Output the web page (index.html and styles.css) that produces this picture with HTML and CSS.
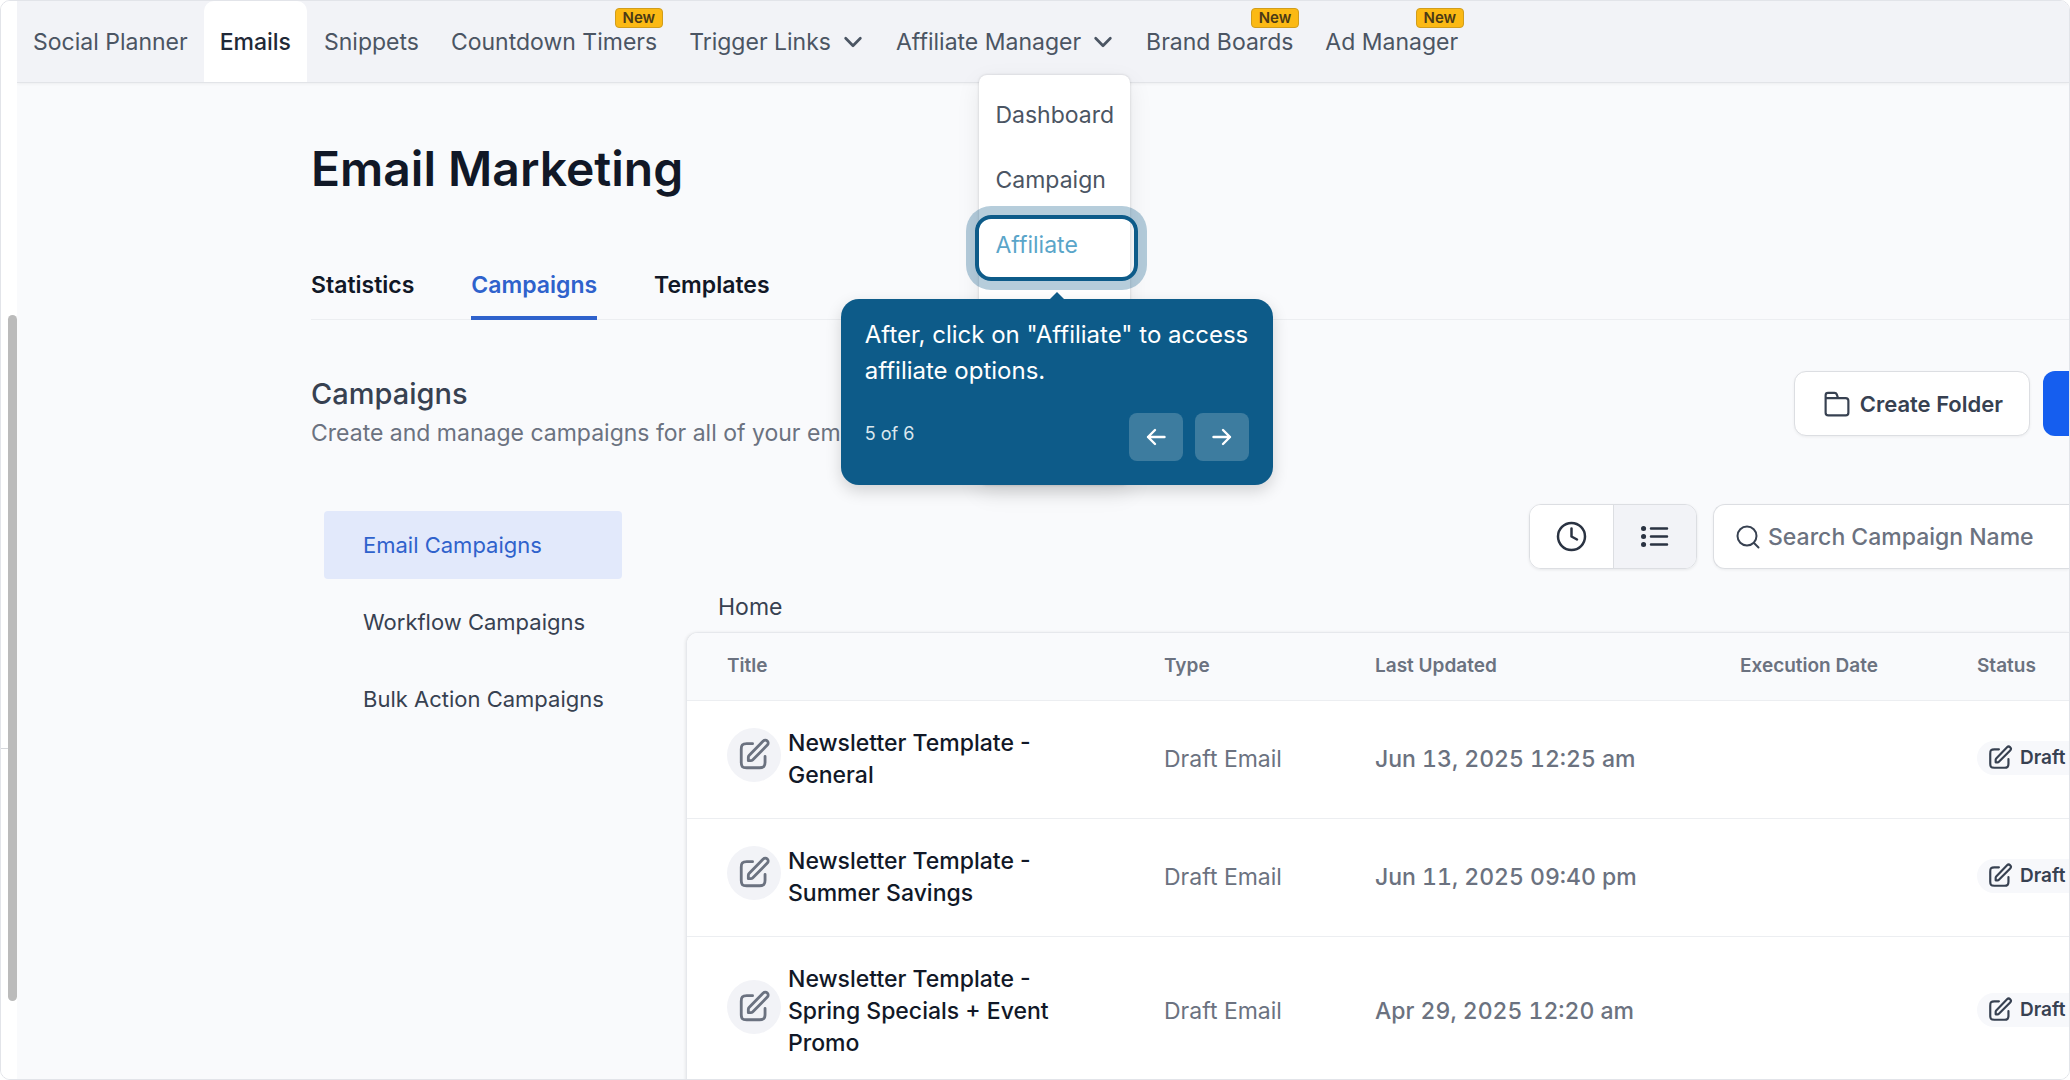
FILE: index.html
```html
<!DOCTYPE html>
<html lang="en">
<head>
  <meta charset="UTF-8" />
  <title>Email Marketing - Campaigns</title>
  <link rel="stylesheet" href="styles.css">
</head>
<body>
  <svg class="sprite" aria-hidden="true">
    <symbol id="chevron" viewBox="0 0 24 24"><path d="m4 8 8 8 8-8" /></symbol>
    <symbol id="edit" viewBox="0 0 24 24"><path d="M11 4H6.800c-1.700 0-2.500.3-3.100.9S3 6.500 3 8v9.200c0 1.700.2 2.400.7 3s1.400.8 3.100.8H16c1.700 0 2.400-.2 3-.8s.8-1.300.8-3V13M8 16h1.700c.5 0 .9-.1 1.300-.5L21.400 5a2 2 0 0 0-2.900-2.900L8.500 12.400c-.4.4-.5.800-.5 1.300V16Z" /></symbol>
  </svg>

  <div class="app">
    <div class="rail">
      <div class="rail-line"></div>
      <div class="scroll-thumb"></div>
    </div>

    <div class="page">
      <nav class="topnav">
        <a href="#" class="nav-item">Social Planner</a>
        <a href="#" class="nav-item active">Emails</a>
        <a href="#" class="nav-item">Snippets</a>
        <a href="#" class="nav-item">Countdown Timers<span class="badge">New</span></a>
        <a href="#" class="nav-item">Trigger Links <svg class="chevron"><use href="#chevron" /></svg></a>
        <div class="nav-group">
          <a href="#" class="nav-item">Affiliate Manager <svg class="chevron"><use href="#chevron" /></svg></a>
          <div class="dropdown">
            <a href="#">Dashboard</a>
            <a href="#">Campaign</a>
            <div class="highlight-wrap">
              <a href="#" class="current">Affiliate</a>
              <div class="highlight">
                <!-- Guide step -->
                <div class="guide">
                  <p>After, click on "Affiliate" to access affiliate options.</p>
                  <div class="guide-footer">
                    <span class="step">5 of 6</span>
                    <button type="button" aria-label="Previous"><svg viewBox="0 0 24 24"><path d="M20.500 12H4m7-7-7 7 7 7" /></svg></button>
                    <button type="button" aria-label="Next"><svg viewBox="0 0 24 24"><path d="M3.500 12H20m-7-7 7 7-7 7" /></svg></button>
                  </div>
                </div>
              </div>
            </div>
          </div>
        </div>
        <a href="#" class="nav-item">Brand Boards<span class="badge">New</span></a>
        <a href="#" class="nav-item">Ad Manager<span class="badge">New</span></a>
      </nav>

      <main>
        <h1>Email Marketing</h1>
        <div class="tabs">
          <a href="#">Statistics</a>
          <a href="#" class="active">Campaigns</a>
          <a href="#">Templates</a>
        </div>

        <div class="section-head">
          <div class="section-text">
            <h2>Campaigns</h2>
            <p>Create and manage campaigns for all of your ema</p>
          </div>
          <button type="button" class="btn">
            <svg viewBox="0 0 24 24"><path d="M1.500 7V4c0-1.400.8-2.200 2.200-2.200h6c1 0 1.700.4 2 1.200L13 6.500M1.500 6.500H20c1.600 0 2.500.9 2.500 2.500v11c0 1.600-.9 2.500-2.500 2.500H4c-1.600 0-2.500-.9-2.500-2.500Z" /></svg>
            Create Folder
          </button>
          <button type="button" class="btn-primary" aria-label="New campaign"></button>
        </div>

        <div class="columns">
          <div class="side">
            <a href="#" class="active">Email Campaigns</a>
            <a href="#">Workflow Campaigns</a>
            <a href="#">Bulk Action Campaigns</a>
          </div>

          <div class="list">
            <div class="toolbar">
              <div class="toggle">
                <button type="button" aria-label="Recent"><svg viewBox="0 0 32 32"><circle cx="15.500" cy="15.500" r="13.500" /><path d="M15.500 7.500v8l5.500 3" /></svg></button>
                <button type="button" class="on" aria-label="List"><svg viewBox="0 0 32 32"><path d="M12 7.500h16M12 15.500h16M12 23.500h16" /><path class="dots" d="M4.500 7.500h.1M4.500 15.500h.1M4.500 23.500h.1" /></svg></button>
              </div>
              <label class="search">
                <svg viewBox="0 0 24 24"><circle cx="11" cy="11" r="9.500" /><path d="m18 18 4.500 4.500" /></svg>
                <input type="text" placeholder="Search Campaign Name" aria-label="Search Campaign Name" />
              </label>
            </div>
            <a href="#" class="crumb">Home</a>

            <div class="table-box">
              <table>
                <thead>
                  <tr>
                    <th class="c-title">Title</th>
                    <th class="c-type">Type</th>
                    <th class="c-updated">Last Updated</th>
                    <th class="c-date">Execution Date</th>
                    <th>Status</th>
                  </tr>
                </thead>
                <tbody>
                  <tr>
                    <td><div class="title"><span class="circle"><svg><use href="#edit" /></svg></span><span class="name">Newsletter Template - General</span></div></td>
                    <td>Draft Email</td>
                    <td class="updated">Jun 13, 2025 12:25 am</td>
                    <td></td>
                    <td><span class="status"><svg><use href="#edit" /></svg>Draft</span></td>
                  </tr>
                  <tr>
                    <td><div class="title"><span class="circle"><svg><use href="#edit" /></svg></span><span class="name">Newsletter Template - Summer Savings</span></div></td>
                    <td>Draft Email</td>
                    <td class="updated">Jun 11, 2025 09:40 pm</td>
                    <td></td>
                    <td><span class="status"><svg><use href="#edit" /></svg>Draft</span></td>
                  </tr>
                  <tr>
                    <td><div class="title"><span class="circle"><svg><use href="#edit" /></svg></span><span class="name">Newsletter Template - Spring Specials + Event Promo</span></div></td>
                    <td>Draft Email</td>
                    <td class="updated">Apr 29, 2025 12:20 am</td>
                    <td></td>
                    <td><span class="status"><svg><use href="#edit" /></svg>Draft</span></td>
                  </tr>
                </tbody>
              </table>
            </div>
          </div>
        </div>
      </main>
    </div>
  </div>
</body>
</html>
```
FILE: styles.css
```css
* {
  box-sizing: border-box;
}
body {
  margin: 0;
  background: #fff;
  font-family: Inter, "Liberation Sans", sans-serif;
  font-size: 23px;
  line-height: 32px;
  color: #374151;
}
h1, h2, p {
  margin: 0;
}
a {
  color: inherit;
  text-decoration: none;
}
button {
  font: inherit;
  color: inherit;
  cursor: pointer;
}
svg {
  fill: none;
  stroke: currentColor;
  stroke-width: 2;
  stroke-linecap: round;
  stroke-linejoin: round;
  flex: none;
}
.sprite {
  display: none;
}
.app {
  display: flex;
  height: 100vh;
  overflow: hidden;
  border: 1px solid #e2e4e9;
  border-radius: 10px;
}

/* Left edge with the scrollbar */
.rail {
  position: relative;
  width: 16px;
  flex: none;
  background: #fff;
}
.rail-line {
  position: absolute;
  top: 747px;
  left: 0;
  width: 7px;
  height: 1px;
  background: #d5d7db;
}
.scroll-thumb {
  position: absolute;
  top: 314px;
  right: 0;
  width: 9px;
  height: 686px;
  border-radius: 5px;
  background: #bbb;
}
.page {
  flex: 1;
  min-width: 0;
  background: #f9fafc;
}

/* Top navigation */
.topnav {
  display: flex;
  height: 82px;
  background: #f2f3f7;
  border-bottom: 1px solid #e2e4e8;
  box-shadow: 0 1px 3px rgba(0, 0, 0, 0.05);
  color: #4b5563;
}
.nav-item {
  position: relative;
  display: flex;
  align-items: center;
  gap: 11px;
  height: 81px;
  padding: 0 16px;
  white-space: nowrap;
}
.nav-item.active {
  margin-right: 1px;
  background: #fff;
  border-radius: 10px 10px 0 0;
  font-weight: 500;
  color: #1f2937;
}
.chevron {
  width: 22px;
  height: 22px;
  stroke-width: 3;
}
.badge {
  position: absolute;
  top: 7px;
  right: 10px;
  padding: 0 7px;
  border: 1px solid #d19d1c;
  border-radius: 4px;
  background: #fbb914;
  font-size: 15px;
  font-weight: 600;
  line-height: 18px;
  color: #4b3a16;
}
.nav-group {
  position: relative;
}
.dropdown {
  position: absolute;
  z-index: 2;
  top: 74px;
  right: 0;
  min-height: 410px;
  padding: 8px 16px;
  background: #fff;
  border-radius: 8px;
  box-shadow: 0 0 3px rgba(0, 0, 0, 0.16), 0 8px 24px rgba(0, 0, 0, 0.08);
}
.dropdown a {
  display: block;
  line-height: 65px;
}
.dropdown .current {
  color: #5aa5c9;
}
.highlight-wrap {
  position: relative;
}
.highlight {
  position: absolute;
  top: 2px;
  bottom: -3px;
  left: -20px;
  right: -24px;
  border: 4px solid #0d5b89;
  border-radius: 16px;
  box-shadow: 0 0 0 9px rgba(13, 91, 137, 0.3);
}

/* Guide popup */
.guide {
  position: absolute;
  top: 80px;
  left: 50%;
  width: 432px;
  margin-left: -216px;
  padding: 18px 24px 24px;
  border-radius: 18px;
  background: #0d5b89;
  box-shadow: 0 6px 16px rgba(0, 0, 0, 0.16);
  color: #fff;
  font-size: 24px;
  line-height: 36px;
}
.guide::before {
  content: "";
  position: absolute;
  top: -7px;
  left: 50%;
  margin-left: -7px;
  border: 7px solid transparent;
  border-top: 0;
  border-bottom-color: #0d5b89;
}
.guide-footer {
  display: flex;
  align-items: center;
  gap: 12px;
  margin-top: 24px;
}
.step {
  flex: 1;
  padding-bottom: 6px;
  font-size: 18px;
  color: #dbe7ee;
}
.guide button {
  display: flex;
  align-items: center;
  justify-content: center;
  width: 54px;
  height: 48px;
  border: 0;
  border-radius: 8px;
  background: #3d7c9f;
}
.guide button svg {
  width: 24px;
  height: 24px;
  color: #fff;
  stroke-width: 2.4;
}

/* Content */
main {
  padding: 54px 0 0 294px;
}
h1 {
  font-size: 48px;
  line-height: 64px;
  font-weight: 600;
  color: #111827;
}
.tabs {
  display: flex;
  gap: 57px;
  margin-top: 68px;
  border-bottom: 1px solid #eceef1;
  font-weight: 600;
  color: #111827;
}
.tabs a {
  padding-bottom: 15px;
  margin-bottom: -1px;
  border-bottom: 4px solid transparent;
}
.tabs .active {
  color: #2f62cc;
  border-bottom-color: #2f62cc;
}
.section-head {
  display: flex;
  align-items: flex-start;
  margin-top: 51px;
}
.section-text {
  flex: 1;
}
h2 {
  font-size: 29px;
  line-height: 46px;
  font-weight: 500;
}
.section-text p {
  color: #6b7280;
}
.btn {
  display: flex;
  align-items: center;
  gap: 10px;
  height: 65px;
  margin-right: 13px;
  padding: 0 26px 0 29px;
  border: 1px solid #dcdee2;
  border-radius: 12px;
  background: #fff;
  box-shadow: 0 1px 3px rgba(0, 0, 0, 0.06);
  font-size: 22px;
  font-weight: 600;
}
.btn svg {
  width: 26px;
  height: 26px;
}
.btn-primary {
  width: 26px;
  height: 65px;
  border: 0;
  border-radius: 12px 0 0 12px;
  background: #155eef;
}
.columns {
  display: flex;
  margin-top: 55px;
}
.side {
  display: flex;
  flex-direction: column;
  gap: 9px;
  width: 298px;
  flex: none;
  margin: 7px 64px 0 13px;
  font-size: 22px;
}
.side a {
  padding-left: 39px;
  line-height: 68px;
  border-radius: 4px;
}
.side .active {
  background: #e2e9fb;
  color: #2f62cc;
}
.list {
  flex: 1;
  min-width: 0;
}
.toolbar {
  display: flex;
  justify-content: flex-end;
  gap: 16px;
  height: 65px;
}
.toggle {
  display: flex;
  border: 1px solid #dcdee2;
  border-radius: 12px;
  overflow: hidden;
  box-shadow: 0 1px 3px rgba(0, 0, 0, 0.08);
}
.toggle button {
  display: flex;
  align-items: center;
  justify-content: center;
  width: 83px;
  border: 0;
  background: #fff;
  color: #2a3342;
}
.toggle .on {
  background: #f2f3f7;
  border-left: 1px solid #dcdee2;
}
.toggle svg {
  width: 32px;
  height: 32px;
  stroke-width: 2.5;
}
.toggle .dots {
  stroke-width: 5;
}
.search {
  display: flex;
  align-items: center;
  gap: 8px;
  width: 356px;
  padding-left: 22px;
  border: 1px solid #dcdee2;
  border-right: 0;
  border-radius: 12px 0 0 12px;
  background: #fff;
  box-shadow: 0 1px 3px rgba(0, 0, 0, 0.06);
}
.search svg {
  width: 24px;
  height: 24px;
}
.search input {
  flex: 1;
  min-width: 0;
  padding: 0;
  border: 0;
  outline: 0;
  background: none;
  font: inherit;
  font-weight: 500;
}
.search input::placeholder {
  color: #6b7280;
}
.crumb {
  display: block;
  margin: 22px 0 9px 32px;
}

/* Campaign table */
.table-box {
  border: 1px solid #e6e8ec;
  border-right: 0;
  border-radius: 12px 0 0 0;
  overflow: hidden;
  background: #fff;
  box-shadow: -1px 0 3px rgba(0, 0, 0, 0.07);
}
table {
  width: 100%;
  table-layout: fixed;
  border-collapse: collapse;
}
.c-title {
  width: 437px;
}
.c-type {
  width: 211px;
}
.c-updated {
  width: 365px;
}
.c-date {
  width: 237px;
}
th {
  height: 67px;
  padding: 0 0 0 40px;
  border-bottom: 1px solid #eceef1;
  background: #f9fafc;
  text-align: left;
  font-size: 19px;
  font-weight: 600;
  color: #6b7280;
}
td {
  padding: 26px 0 27px 40px;
  border-bottom: 1px solid #eceef1;
  color: #6b7280;
  white-space: nowrap;
}
.updated {
  font-weight: 500;
  font-variant-numeric: tabular-nums;
}
.title {
  display: flex;
  align-items: center;
  gap: 7px;
}
.circle {
  display: flex;
  align-items: center;
  justify-content: center;
  width: 54px;
  height: 54px;
  flex: none;
  margin-bottom: 8px;
  border-radius: 50%;
  background: #f2f3f7;
}
.circle svg {
  width: 34px;
  height: 34px;
}
.name {
  width: 270px;
  white-space: normal;
  font-weight: 500;
  color: #111827;
}
.status {
  display: flex;
  align-items: center;
  gap: 7px;
  height: 34px;
  padding-left: 10px;
  margin-bottom: 2px;
  border-radius: 17px 0 0 17px;
  background: #f7f8fb;
  font-size: 19px;
  font-weight: 600;
  color: #374151;
}
.status svg {
  width: 26px;
  height: 26px;
}
```
